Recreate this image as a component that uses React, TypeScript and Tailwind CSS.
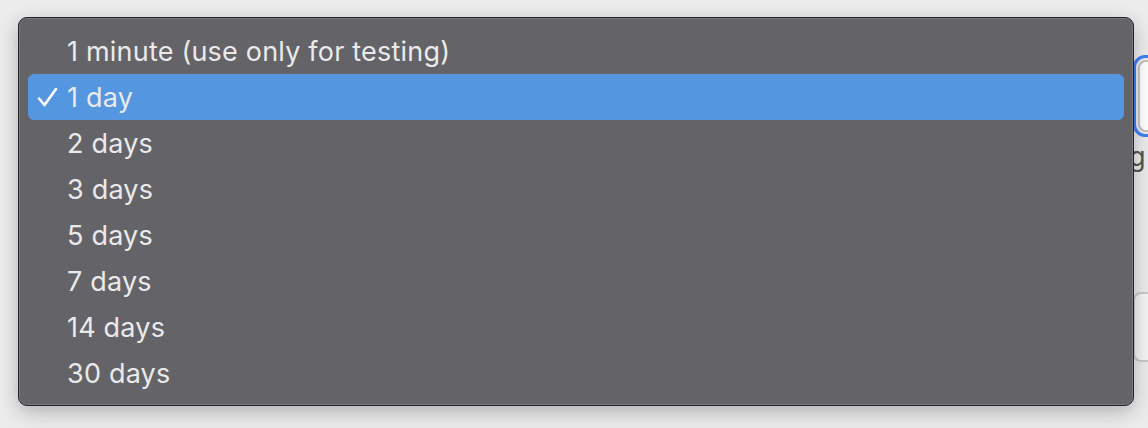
const options = [
  "1 minute (use only for testing)",
  "1 day",
  "2 days",
  "3 days",
  "5 days",
  "7 days",
  "14 days",
  "30 days",
];

export default function App() {
  const selected = "1 day";

  return (
    <div
      className="relative w-[1148px] h-[428px] overflow-hidden bg-[#ececec]"
      style={{ fontFamily: "Inter, 'Noto Sans', sans-serif" }}
    >
      {/* Form behind the menu */}
      <div className="flex flex-col pl-[1133px] pt-[55px]">
        <div className="w-[60px] h-[82px] rounded-[12px] border-[3px] border-[#3b82f6] p-[2px]">
          <div className="w-full h-full rounded-[8px] border-2 border-[#c4c4c4] bg-white" />
        </div>
        <div className="text-[27px] text-[#555] leading-none mt-[6px] -ml-[4px]">g</div>
        <div className="mt-[122px] w-[60px] h-[70px] rounded-[8px] border-2 border-[#c9c9c9] bg-[#f5f5f5]" />
      </div>

      {/* Popup menu */}
      <div className="absolute left-[18px] top-[17px] w-[1116px] rounded-[9px] border border-[#232325] bg-[#646367] px-[9px] pt-[10px] pb-[9px] shadow-[0_6px_20px_rgba(0,0,0,0.25)] ring-1 ring-inset ring-[#7a797d]">
        {options.map((opt) => {
          const active = opt === selected;
          return (
            <div
              key={opt}
              className={`flex items-center h-[46px] rounded-[6px] ${active ? "bg-[#5596e0]" : ""}`}
            >
              <div className="w-[39px] pl-[9px] flex items-center">
                {active && (
                  <svg width="21" height="20" viewBox="0 0 21 20" fill="none">
                    <path
                      d="M2 11.5 L7.5 18 L19 2"
                      stroke="white"
                      strokeWidth="2.6"
                      strokeLinecap="round"
                      strokeLinejoin="round"
                    />
                  </svg>
                )}
              </div>
              <span className="text-[27px] text-[#eaeaea] leading-none tracking-[0.2px]">{opt}</span>
            </div>
          );
        })}
      </div>
    </div>
  );
}
